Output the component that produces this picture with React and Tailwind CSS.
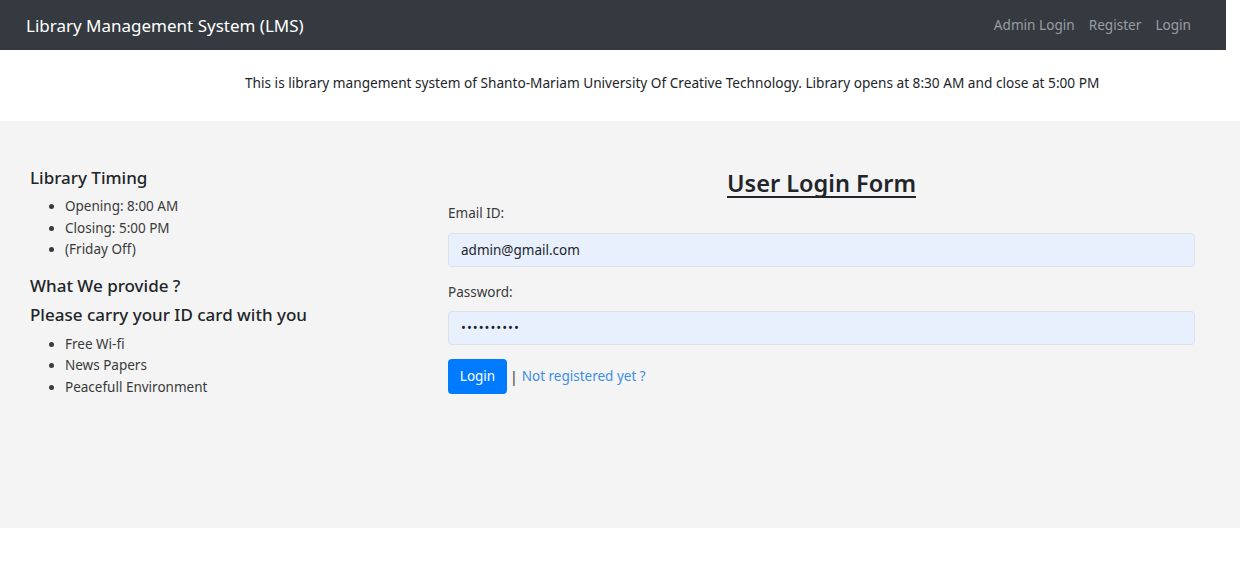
export default function App() {
  return (
    <div className="w-[1240px] h-[577px] bg-white font-['Noto_Sans',_'Open_Sans',_sans-serif] text-[#212529]">
      <nav className="w-[1226px] h-[50px] bg-[#343a40] flex items-center justify-between pl-[26px] pr-[35px]">
        <span className="text-white text-[17px] leading-none">Library Management System (LMS)</span>
        <div className="flex items-center gap-[14px] text-[13.6px] text-[#9a9da0]">
          <span>Admin Login</span>
          <span>Register</span>
          <span>Login</span>
        </div>
      </nav>
      <div className="h-[71px] flex items-center pl-[245px] pb-[4px]">
        <p className="text-[13.65px] text-[#212529] whitespace-nowrap">
          This is library mangement system of Shanto-Mariam University Of Creative Technology. Library opens at 8:30 AM and close at 5:00 PM
        </p>
      </div>
      <div className="h-[407px] bg-[#f4f4f4] flex pt-[44px]">
        <div className="w-[448px] shrink-0 pl-[30px]">
          <h5 className="text-[17px] font-medium leading-[24px] mb-[6px] mt-[1px]">Library Timing</h5>
          <ul className="list-disc pl-[35px] text-[13.5px] leading-[21.5px] text-[#3a3a3a]">
            <li>Opening: 8:00 AM</li>
            <li>Closing: 5:00 PM</li>
            <li>(Friday Off)</li>
          </ul>
          <h5 className="text-[17px] font-medium leading-[24px] mt-[13px]">What We provide ?</h5>
          <h5 className="text-[17px] font-medium leading-[24px] mt-[5px] mb-[7px]">Please carry your ID card with you</h5>
          <ul className="list-disc pl-[35px] text-[13.5px] leading-[21.5px] text-[#3a3a3a]">
            <li>Free Wi-fi</li>
            <li>News Papers</li>
            <li>Peacefull Environment</li>
          </ul>
        </div>
        <div className="w-[747px]">
          <h3 className="text-center text-[23.5px] font-semibold underline [text-decoration-skip-ink:none] decoration-[2px] underline-offset-[4px] leading-[36px] text-[#212529]">User Login Form</h3>
          <label className="block text-[13.5px] text-[#3a3a3a] mt-[2px] leading-[20px]">Email ID:</label>
          <div className="mt-[10px] h-[34px] bg-[#e8f0fe] border border-[#dde1e6] rounded-[4px] flex items-center px-[12px] text-[13.5px]">admin@gmail.com</div>
          <label className="block text-[13.5px] text-[#3a3a3a] mt-[15px] leading-[20px]">Password:</label>
          <div className="mt-[9px] h-[34px] bg-[#e8f0fe] border border-[#dde1e6] rounded-[4px] flex items-center px-[12px] text-[13px] tracking-[1px]">••••••••••</div>
          <div className="mt-[14px] flex items-center">
            <button className="h-[35px] w-[59px] bg-[#007bff] text-white rounded-[4px] text-[13.5px]">Login</button>
            <span className="ml-[3px] text-[14px] text-[#333]">|</span>
            <span className="ml-[4px] text-[13.5px] text-[#3b8eea]">Not registered yet ?</span>
          </div>
        </div>
      </div>
    </div>
  );
}
